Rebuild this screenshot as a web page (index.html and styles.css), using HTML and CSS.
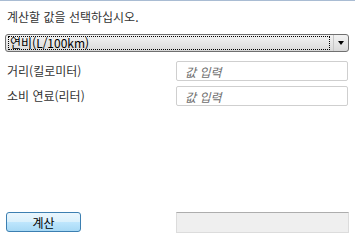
FILE: index.html
```html
<!DOCTYPE html>
<html lang="ko">
  <head>
    <meta charset="UTF-8" />
    <title>연비 계산기</title>
    <link rel="stylesheet" href="styles.css">
  </head>
  <body>
    <div class="panel">
      <p class="title">계산할 값을 선택하십시오.</p>
      <div class="select">
        <span class="select-value"><span class="focus">연비(L/100km)</span></span>
        <span class="select-arrow"></span>
      </div>
      <div class="fields">
        <label class="field-label">거리(킬로미터)</label>
        <input class="field-input" type="text" placeholder="값 입력" />
        <label class="field-label">소비 연료(리터)</label>
        <input class="field-input" type="text" placeholder="값 입력" />
      </div>
      <div class="footer">
        <button class="calc">계산</button>
        <div class="result"></div>
      </div>
    </div>
  </body>
</html>
```

FILE: styles.css
```css
body {
  margin: 0;
  padding: 0;
  background: #fff;
  font-family: "Noto Sans CJK KR", "Noto Sans", sans-serif;
  font-size: 12px;
  color: #333;
}
.panel {
  box-sizing: border-box;
  height: 242px;
  border-top: 1px solid #a9bcd3;
  padding: 0 6px 9px 5px;
  display: flex;
  flex-direction: column;
}
.title {
  margin: 8px 0 0 2px;
  line-height: 16px;
}
.select {
  margin-top: 9px;
  height: 18px;
  box-sizing: border-box;
  border: 1px solid #707070;
  border-radius: 3px;
  background: linear-gradient(#f3f3f3, #e6e6e6 50%, #d9d9d9);
  display: flex;
}
.select-value {
  flex: 1;
  padding: 1px 3px 1px 2px;
  display: flex;
}
.focus {
  flex: 1;
  border: 1px dotted #000;
  line-height: 12px;
  font-size: 12px;
  color: #000;
  padding-left: 1px;
}
.select-arrow {
  width: 14px;
  border-left: 1px solid #c8c8c8;
  position: relative;
}
.select-arrow::after {
  content: "";
  position: absolute;
  left: 4px;
  top: 6px;
  border-left: 3px solid transparent;
  border-right: 3px solid transparent;
  border-top: 4px solid #000;
}
.fields {
  margin-top: 9px;
  display: grid;
  grid-template-columns: 171px 1fr;
  row-gap: 5px;
  align-items: center;
}
.field-label {
  padding-left: 2px;
  line-height: 20px;
}
.field-input {
  box-sizing: border-box;
  height: 20px;
  margin: 0 1px 0 0;
  border: 1px solid #cfcfcf;
  border-radius: 2px;
  padding: 0 8px;
  font-family: inherit;
  font-size: 12px;
}
.field-input::placeholder {
  color: #6d6d6d;
  font-style: italic;
}
.footer {
  margin-top: auto;
  display: flex;
  justify-content: space-between;
  align-items: flex-start;
}
.calc {
  margin-left: 1px;
  width: 75px;
  height: 20px;
  border: 1px solid #3c7fb1;
  border-radius: 3px;
  background: linear-gradient(#eaf6fd, #d9f0fc 50%, #bee6fd 51%, #a7d9f5);
  font-family: inherit;
  font-size: 12px;
  color: #000;
  padding: 0;
}
.result {
  width: 173px;
  height: 21px;
  box-sizing: border-box;
  background: #efefef;
  border: 1px solid #dcdcdc;
  border-top-color: #adadad;
}
```
